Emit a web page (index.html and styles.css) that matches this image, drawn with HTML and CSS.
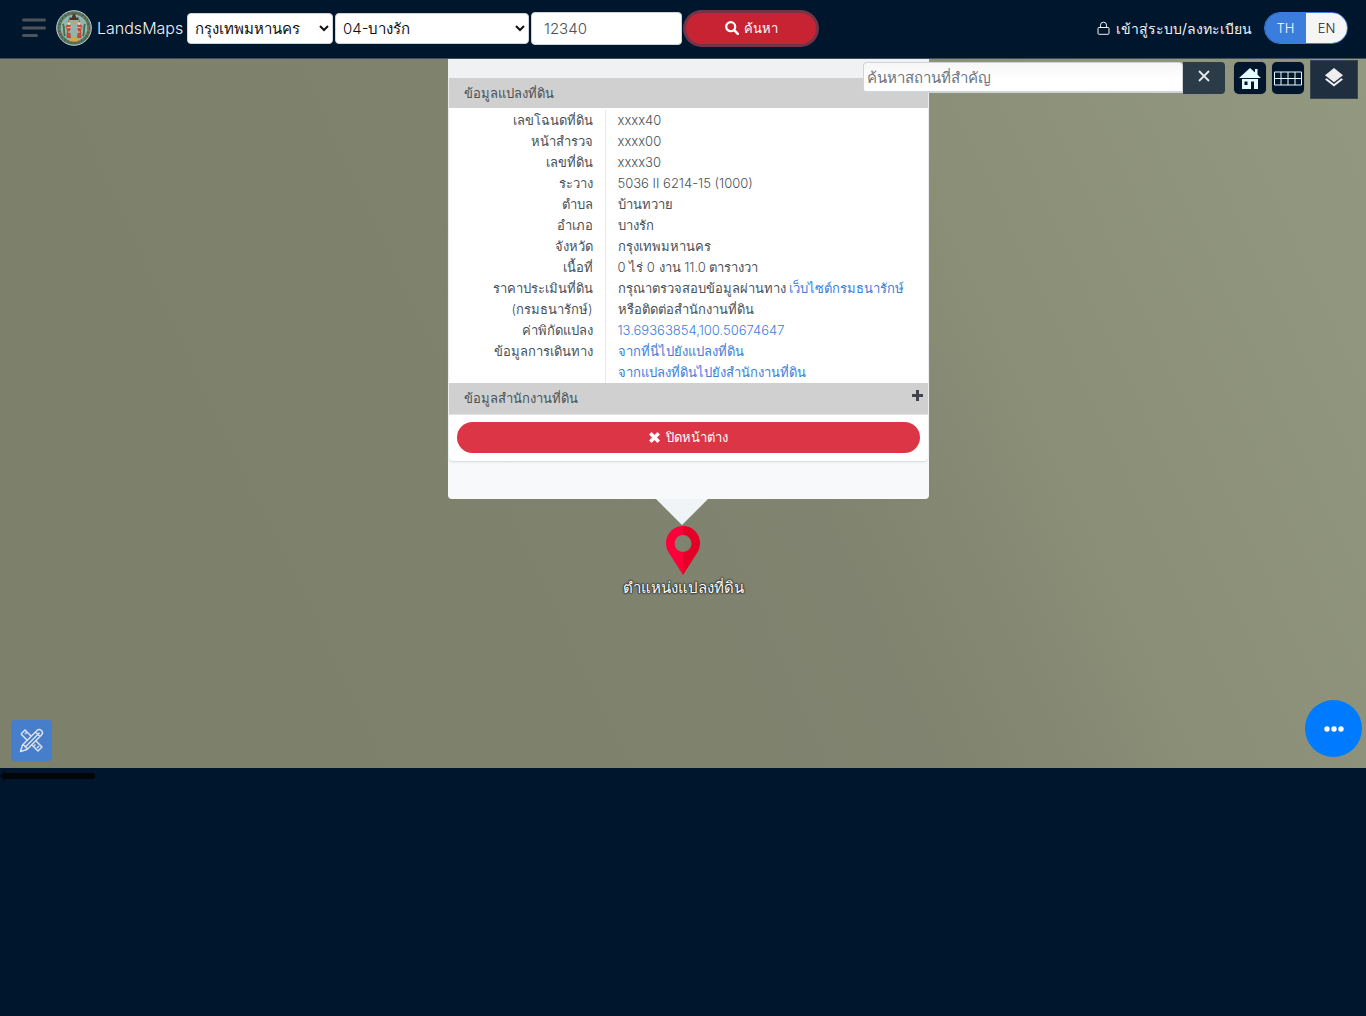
FILE: index.html
```html
<!DOCTYPE html>
<html lang="th">
<head>
<meta charset="utf-8">
<meta name="viewport" content="width=device-width, initial-scale=1">
<title>LandsMaps</title>
<link rel="stylesheet" href="styles.css">
</head>
<body>
<header class="topbar">
  <button class="menu-button" type="button" aria-label="เมนู">
    <svg width="24" height="20" viewBox="0 0 24 20" stroke="currentColor" stroke-width="3" stroke-linecap="round"><path d="M1.500 2H22.500M1.500 10H22.500M1.500 17.500H14.500"/></svg>
  </button>
  <a class="brand" href="#">
    <svg class="seal" viewBox="0 0 36 36" aria-hidden="true">
      <circle cx="18" cy="18" r="17.300" fill="#5c7a68" stroke="#bfd0cc" stroke-width="1"/>
      <circle cx="18" cy="18" r="13.500" fill="#8fb5b0"/>
      <g fill="none" stroke="#42684c" stroke-width="2.500" stroke-dasharray="2 1.500"><circle cx="18" cy="18" r="14.800"/></g>
      <g fill="none" stroke="#b9534a" stroke-width="1.500" stroke-dasharray="1.500 4"><circle cx="18" cy="18" r="14.300"/></g>
      <path d="M13.500 10V7l2 1 1-2.500L18 3l1.500 2.500 1 2.500 2-1v3z" fill="#5a2e26"/>
      <path d="M15 11h6l-1 1.500h-4z" fill="#d79a48"/>
      <path d="M12.500 9l1.500 5 1 3-1 3 1 8h-4.500L11 20l-1.500-3 2-3z" fill="#c4473d"/>
      <path d="M23.500 9l-1.500 5-1 3 1 3-1 8h4.500L25 20l1.500-3-2-3z" fill="#c4473d"/>
      <circle cx="12.800" cy="13.500" r="1.500" fill="#ecd0b0"/><circle cx="23.200" cy="13.500" r="1.500" fill="#ecd0b0"/>
      <path d="M10.500 18l5-1M20.500 17l5 1M12 22h3M21 22h3" stroke="#e9c39a" stroke-width="1"/>
      <path d="M7 14c2 4 0 8 2 12M29 14c-2 4 0 8-2 12" fill="none" stroke="#39744a" stroke-width="1.800"/>
      <path d="M13 30l2-2 3-2 3 2 2 2-2 1.500h-6z" fill="#dba53f"/>
    </svg>
    <span>LandsMaps</span>
  </a>
  <form class="search">
    <select class="field province" aria-label="จังหวัด"><option>กรุงเทพมหานคร</option></select>
    <select class="field district" aria-label="อำเภอ"><option>04-บางรัก</option></select>
    <input class="field parcel" type="text" value="12340" aria-label="เลขโฉนดที่ดิน">
    <button class="search-button" type="button">
      <svg width="14" height="14" viewBox="0 0 14 14" fill="none" stroke="currentColor"><circle cx="5.700" cy="5.700" r="4.500" stroke-width="2.200"/><path d="M9.200 9.200L12.800 12.800" stroke-width="2.600" stroke-linecap="round"/></svg>
      ค้นหา
    </button>
  </form>
  <nav class="account">
    <a class="login" href="#">
      <svg width="13" height="14" viewBox="0 0 13 14" fill="none" stroke="currentColor"><rect x="1" y="6.500" width="11" height="6.800" rx="1"/><path d="M3.500 6.500V4.200a3 3 0 0 1 6 0v2.300"/></svg>
      เข้าสู่ระบบ/ลงทะเบียน
    </a>
    <div class="languages">
      <button class="language active" type="button">TH</button>
      <button class="language" type="button">EN</button>
    </div>
  </nav>
</header>

<main class="map">
  <article class="popup">
    <section class="card">
      <h2 class="section-title">ข้อมูลแปลงที่ดิน</h2>
      <table class="details">
        <tr><th scope="row">เลขโฉนดที่ดิน</th><td>xxxx40</td></tr>
        <tr><th scope="row">หน้าสำรวจ</th><td>xxxx00</td></tr>
        <tr><th scope="row">เลขที่ดิน</th><td>xxxx30</td></tr>
        <tr><th scope="row">ระวาง</th><td>5036 II 6214-15 (1000)</td></tr>
        <tr><th scope="row">ตำบล</th><td>บ้านทวาย</td></tr>
        <tr><th scope="row">อำเภอ</th><td>บางรัก</td></tr>
        <tr><th scope="row">จังหวัด</th><td>กรุงเทพมหานคร</td></tr>
        <tr><th scope="row">เนื้อที่</th><td>0 ไร่ 0 งาน 11.0 ตารางวา</td></tr>
        <tr><th scope="row">ราคาประเมินที่ดิน<br>(กรมธนารักษ์)</th><td>กรุณาตรวจสอบข้อมูลผ่านทาง <a href="#">เว็บไซต์กรมธนารักษ์</a><br>หรือติดต่อสำนักงานที่ดิน</td></tr>
        <tr><th scope="row">ค่าพิกัดแปลง</th><td><a href="#">13.69363854,100.50674647</a></td></tr>
        <tr><th scope="row">ข้อมูลการเดินทาง</th><td><a href="#">จากที่นี่ไปยังแปลงที่ดิน</a><br><a href="#">จากแปลงที่ดินไปยังสำนักงานที่ดิน</a></td></tr>
      </table>
      <h2 class="section-title office">ข้อมูลสำนักงานที่ดิน
        <button class="expand" type="button" aria-label="ขยาย"><svg width="11" height="11" viewBox="0 0 11 11" stroke="currentColor" stroke-width="3"><path d="M0 5.500H11M5.500 0V11"/></svg></button>
      </h2>
      <div class="actions">
        <button class="close-button" type="button">
          <svg width="11" height="11" viewBox="0 0 11 11" stroke="currentColor" stroke-width="3.600"><path d="M1.300 1.300L9.700 9.700M9.700 1.300L1.300 9.700"/></svg>
          ปิดหน้าต่าง
        </button>
      </div>
    </section>
  </article>
  <svg class="pointer" width="52" height="26" viewBox="0 0 52 26" aria-hidden="true"><path d="M0 0H52L26 26z" fill="#f1f4f7"/></svg>
  <figure class="marker">
    <svg width="34" height="49" viewBox="0 0 34 49" aria-hidden="true">
      <path d="M17 0a17 17 0 0 0-17 17c0 4 1 7 3 10l14 22V26a8.500 8.500 0 0 1 0-17z" fill="#fd003a"/>
      <path d="M17 0a17 17 0 0 1 17 17c0 4-1 7-3 10L17 49V26a8.500 8.500 0 0 0 0-17z" fill="#e50027"/>
    </svg>
    <figcaption>ตำแหน่งแปลงที่ดิน</figcaption>
  </figure>

  <div class="map-tools">
    <div class="place-search">
      <input class="place-input" type="text" placeholder="ค้นหาสถานที่สำคัญ" aria-label="ค้นหาสถานที่สำคัญ">
      <button class="clear-button" type="button" aria-label="ล้าง"><svg width="12" height="12" viewBox="0 0 12 12" stroke="currentColor" stroke-width="1.800"><path d="M1 1L11 11M11 1L1 11"/></svg></button>
    </div>
    <button class="tool" type="button" aria-label="หน้าแรก"><svg width="22" height="23" viewBox="0 0 22 23" fill="currentColor"><path d="M11 1L0 11H22L18.500 7.800V2H16V5.500z"/><path fill-rule="evenodd" d="M3 12H19V22H15V14.500H12V22H3zM5.500 14.500V18H8.500V14.500z"/></svg></button>
    <button class="tool" type="button" aria-label="กริด"><svg width="28" height="15" viewBox="0 0 28 15" fill="none" stroke="currentColor"><path d="M.5 1H27.500V14H.5zM.5 7.500H27.500M7 1V14M14 1V14M21 1V14"/></svg></button>
    <button class="layers" type="button" aria-label="ชั้นข้อมูล"><svg width="20" height="20" viewBox="0 0 20 20" fill="currentColor"><path d="M10 0L19 7.200 10 14.300 1 7.200z"/><path d="M1 11.500L2.700 10.200 10 16 17.300 10.200 19 11.500 10 18.600z"/></svg></button>
  </div>

  <button class="draw" type="button" aria-label="เครื่องมือวาด">
    <svg width="25" height="25" viewBox="0 0 25 25" fill="none" stroke="currentColor" stroke-width="1.500" stroke-linejoin="round">
      <path d="M2 6L6 2 12 8M8 12L2 6M16.500 12.500L23 19 19 23 12.500 16.500"/><path d="M6 6l2-2M18 20l2-2M15 18l1.500-1.500"/>
      <path d="M1.500 23.500L3.500 17 18 2.500Q20 .5 22.500 2.500 24.500 5 22.500 7L8 21.500zM3.500 17Q6 17 6.300 19 8 19.500 8 21.500M6.300 19L20.500 4.800M16.500 4L21 8.500"/>
    </svg>
  </button>
  <button class="more" type="button" aria-label="เพิ่มเติม"><svg width="20" height="6" viewBox="0 0 20 6" fill="currentColor"><circle cx="3" cy="3" r="2.700"/><circle cx="10" cy="3" r="2.700"/><circle cx="17" cy="3" r="2.700"/></svg></button>
</main>
<svg class="scale" width="96" height="16" viewBox="0 0 96 16" aria-hidden="true"><path d="M0 8L5 3V5H93Q95 5 95 8 95 11 93 11H5V13z" fill="#020609"/></svg>
</body>
</html>
```
FILE: styles.css
```css
* { box-sizing: border-box; }
body {
  margin: 0;
  min-height: 100vh;
  background: #00162d;
  color: #495057;
  font: 300 14px/21px Inter, "Open Sans", sans-serif;
}
button, input, select { font: inherit; }
button {
  display: inline-flex;
  align-items: center;
  justify-content: center;
  padding: 0;
  border: 0;
  cursor: pointer;
}
svg { display: block; flex: none; }
a { color: #3b7ddd; text-decoration: none; }

.topbar {
  display: flex;
  align-items: center;
  height: 59px;
  padding: 0 18px 2px 22px;
  border-bottom: 1px solid #3c4f5b;
  background: #00162d;
}
.menu-button { background: none; color: #4c535a; }
.brand {
  display: flex;
  align-items: center;
  gap: 5px;
  width: 131px;
  margin-left: 10px;
  color: #f1f3f5;
  font-size: 16px;
}
.seal { width: 36px; height: 36px; }
.search { display: flex; align-items: center; gap: 2px; }
.field {
  height: 31px;
  border: 1px solid #ced4da;
  border-radius: 4px;
  background: #fff;
  color: #111;
}
select.field { padding: 0 0 0 3px; font-size: 15px; }
.province { width: 146px; }
.district { width: 194px; }
.parcel { width: 151px; height: 33px; padding: 0 12px; color: #495057; font-size: 15px; }
.search-button {
  gap: 5px;
  width: 130px;
  height: 31px;
  margin-left: 2px;
  border-radius: 16px;
  background: #c82333;
  box-shadow: 0 0 0 3px #71354a;
  color: #fff;
  font-size: 13px;
  font-weight: 400;
}
.account { display: flex; align-items: center; gap: 12px; margin-left: auto; }
.login { display: flex; align-items: center; gap: 6px; color: #f1f3f5; font-weight: 400; }
.languages {
  display: flex;
  overflow: hidden;
  border: 1px solid #3b7ddd;
  border-radius: 16px;
}
.language { width: 41px; height: 30px; background: #f5f5f5; color: #212529; font-size: 13px; }
.language.active { background: #3b7ddd; color: #fff; }

.map {
  position: relative;
  display: flex;
  flex-direction: column;
  align-items: center;
  padding-bottom: 169px;
  background: linear-gradient(65deg, #7d816b 0%, #7f836f 55%, #8b8f77 72%, #939880 100%);
}
.popup {
  width: 481px;
  max-width: 100%;
  margin-left: 11px;
  padding: 19px 1px 38px;
  border-radius: 0 0 4px 4px;
  background: linear-gradient(#eff1f3, #f8f9fb);
}
.card {
  border-radius: 4px;
  background: #fff;
  box-shadow: 0 1px 2px #d4d8dc;
  font-size: 13px;
}
.section-title {
  display: flex;
  justify-content: space-between;
  height: 30px;
  margin: 0;
  padding: 5px 5px 4px 15px;
  background: #d0d0d0;
  font-size: 13px;
  font-weight: 300;
  line-height: 21px;
}
.office { height: 32px; border-bottom: 1px solid #e3e3e3; }
.expand { height: 15px; background: none; color: #43434f; }
.details { width: 100%; margin: 2px 0 0; border-collapse: collapse; table-layout: fixed; }
.details th, .details td { padding: 0 12px; vertical-align: top; white-space: nowrap; }
.details th { width: 156px; border-right: 1px solid #e6e8ea; text-align: right; font-weight: 300; }
.actions { padding: 7px 8px 8px; }
.close-button {
  gap: 6px;
  width: 100%;
  height: 31px;
  border-radius: 16px;
  background: #dc3545;
  color: #fff;
  font-weight: 400;
}
.pointer { margin-left: -2px; }
.marker { display: flex; flex-direction: column; align-items: center; margin: 1px 0 0; }
.marker figcaption {
  height: 24px;
  padding-top: 2px;
  color: #fff;
  font-size: 15px;
  font-weight: 400;
  text-shadow: 0 0 2px #222, 0 0 2px #222, 0 0 2px #222;
}

.map-tools {
  position: absolute;
  top: 1px;
  right: 8px;
  display: flex;
  gap: 6px;
  align-items: flex-start;
}
.place-search { display: flex; width: 362px; height: 32px; margin: 2px 3px 0 0; }
.place-input {
  flex: 1;
  min-width: 0;
  height: 31px;
  padding: 0 3px;
  border: 1px solid #ced4da;
  border-bottom-width: 2px;
  border-radius: 4px 4px 0 4px;
  background: linear-gradient(#f6f6f6, #fff 60%);
  font-size: 15px;
}
.place-input::placeholder { color: #6c757d; opacity: 1; }
.clear-button { width: 42px; height: 32px; border-radius: 0 4px 4px 0; background: #2b3b47; color: #e8e8e8; padding-bottom: 4px; }
.tool {
  width: 32px;
  height: 32px;
  margin-top: 2px;
  border-radius: 5px;
  background: #00162d;
  box-shadow: 0 0 1px #454f50;
  color: #e6fbfd;
}
.layers { width: 48px; height: 39px; padding-bottom: 4px; border: 1px solid #364650; background: #1f2f3f; color: #eee; }
.draw {
  position: absolute;
  left: 11px;
  bottom: 7px;
  width: 41px;
  height: 41px;
  border-radius: 4px;
  background: #477ecb;
  color: #dce2e8;
}
.more {
  position: absolute;
  right: 4px;
  bottom: 11px;
  width: 57px;
  height: 57px;
  border-radius: 50%;
  background: #007bff;
  color: #fff;
}
```
